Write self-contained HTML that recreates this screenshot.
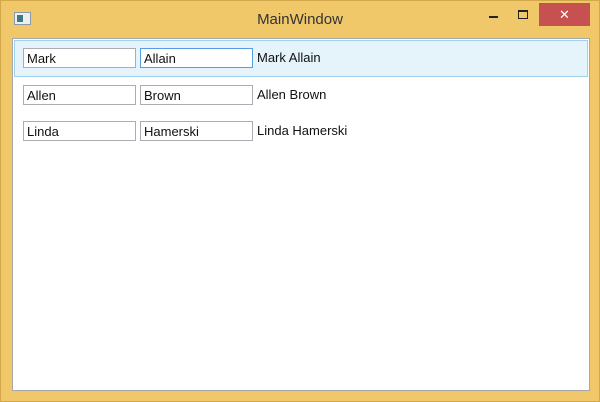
<!DOCTYPE html>
<html><head><style>
*{margin:0;padding:0;box-sizing:border-box}
body{width:600px;height:402px;background:#F0C86A;position:relative;overflow:hidden;font-family:"Segoe UI","Liberation Sans",sans-serif}
.frame{position:absolute;left:0;top:0;width:600px;height:402px;border:1px solid #D2A84A}
.title{position:absolute;left:0;width:600px;top:11px;text-align:center;font-size:15px;color:#333}
.client{position:absolute;left:12px;top:38px;width:578px;height:353px;background:#fff;border:1px solid #A8A8A8}
.sel{position:absolute;left:1px;top:1px;width:574px;height:37px;background:#E5F3FB;border:1px solid #9FD0EE}
.tb{position:absolute;height:20px;width:113px;border:1px solid #ABADB3;background:#fff;font-size:13px;line-height:19px;padding-left:3px;color:#111}
.lb{position:absolute;font-size:13px;color:#111}
.close{position:absolute;left:539px;top:3px;width:51px;height:23px;background:#C75050;color:#fff;text-align:center;font-size:13px;line-height:23px}
</style></head><body>
<div class="frame"></div>
<svg style="position:absolute;left:14px;top:12px" width="18" height="14"><rect x="0.5" y="0.5" width="16" height="12" fill="#eee" stroke="#8a9aa8"/><rect x="3" y="3" width="6" height="7" fill="#3b7a84"/></svg>
<div class="title">MainWindow</div>
<div style="position:absolute;left:489px;top:16px;width:9px;height:2px;background:#222"></div>
<div style="position:absolute;left:518px;top:10px;width:10px;height:9px;border:1px solid #222;border-top-width:2px"></div>
<div class="close">✕</div>
<div class="client">
<div class="sel"></div>
<div class="tb" style="left:10px;top:9px">Mark</div>
<div class="tb" style="left:127px;top:9px;border-color:#569DE5">Allain</div>
<div class="lb" style="left:244px;top:11px">Mark Allain</div>
<div class="tb" style="left:10px;top:46px">Allen</div>
<div class="tb" style="left:127px;top:46px">Brown</div>
<div class="lb" style="left:244px;top:48px">Allen Brown</div>
<div class="tb" style="left:10px;top:82px">Linda</div>
<div class="tb" style="left:127px;top:82px">Hamerski</div>
<div class="lb" style="left:244px;top:84px">Linda Hamerski</div>
</div>
</body></html>
